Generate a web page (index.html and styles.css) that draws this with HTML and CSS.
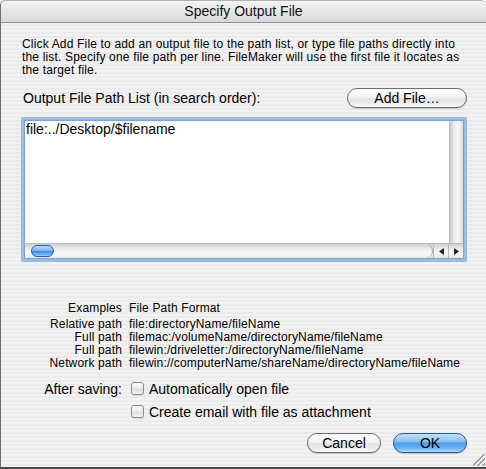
FILE: index.html
```html
<!DOCTYPE html>
<html>
<head>
<meta charset="utf-8">
<link rel="stylesheet" href="styles.css">
</head>
<body>
<div class="window">
  <div class="titlebar">Specify Output File</div>
  <div class="content">
    <p class="desc">Click Add File to add an output file to the path list, or type file paths directly into<br>the list. Specify one file path per line. FileMaker will use the first file it locates as<br>the target file.</p>
    <div class="list-head">
      <span class="label">Output File Path List (in search order):</span>
      <button class="btn btn-add">Add File…</button>
    </div>
    <div class="pathlist">
      <div class="pathlist-main">
        <div class="pathlist-text">file:../Desktop/$filename</div>
        <div class="vtrack"></div>
      </div>
      <div class="hbar">
        <div class="htrack"><span class="hthumb"></span></div>
        <div class="harrow"><svg width="5" height="7" viewBox="0 0 5 7"><path d="M5 0 L0 3.5 L5 7 Z" fill="#222"/></svg></div>
        <div class="harrow"><svg width="5" height="7" viewBox="0 0 5 7"><path d="M0 0 L5 3.5 L0 7 Z" fill="#222"/></svg></div>
      </div>
    </div>
    <div class="examples">
      <span class="ex-label ex-head">Examples</span><span class="ex-head">File Path Format</span>
      <span class="ex-label">Relative path</span><span>file:directoryName/fileName</span>
      <span class="ex-label">Full path</span><span>filemac:/volumeName/directoryName/fileName</span>
      <span class="ex-label">Full path</span><span>filewin:/driveletter:/directoryName/fileName</span>
      <span class="ex-label">Network path</span><span>filewin://computerName/shareName/directoryName/fileName</span>
    </div>
    <div class="after">
      <span class="after-label">After saving:</span>
      <label class="check"><span class="box"></span>Automatically open file</label>
      <span></span>
      <label class="check"><span class="box"></span>Create email with file as attachment</label>
    </div>
    <div class="actions">
      <button class="btn btn-action">Cancel</button>
      <button class="btn btn-action btn-default">OK</button>
    </div>
  </div>
  <div class="grow"></div>
</div>
</body>
</html>
```
FILE: styles.css
```css
* { box-sizing: border-box; }
html, body { margin: 0; padding: 0; background: #fff; }
body { font-family: "Liberation Sans", Arial, sans-serif; color: #000; }

.window {
  position: relative;
  width: 486px;
  height: 469px;
  overflow: hidden;
  border-left: 1px solid #6f6f6f;
  border-bottom: 2px solid #4a4a4a;
  border-top-left-radius: 5px;
  border-top-right-radius: 5px;
  background: repeating-linear-gradient(to bottom, #ebebeb 0, #ebebeb 2px, #f2f2f2 2px, #f2f2f2 4px);
}

.titlebar {
  height: 23px;
  border-bottom: 1px solid #8e8e8e;
  border-top: 1px solid #b0b0b0;
  border-top-left-radius: 5px;
  border-top-right-radius: 5px;
  background: linear-gradient(to bottom, #f3f3f3 0, #e6e6e6 50%, #d9d9d9 100%);
  text-align: center;
  font-size: 14px;
  line-height: 21px;
  color: #111;
}

.content {
  padding: 15px 19px 0 20px;
}

.desc {
  margin: 0 0 0 1px;
  font-size: 12px;
  line-height: 13px;
  letter-spacing: 0.17px;
}

.list-head {
  margin-top: 11px;
  display: flex;
  align-items: center;
  justify-content: space-between;
  height: 20px;
  padding-left: 2px;
}

.label { font-size: 14px; }

.btn {
  font-family: "Liberation Sans", Arial, sans-serif;
  font-size: 14px;
  height: 20px;
  padding: 0;
  border: 1px solid #6c6c6c;
  border-radius: 10px;
  color: #000;
  background: linear-gradient(to bottom, #ffffff 0, #f4f4f4 45%, #e2e2e2 55%, #efefef 85%, #fbfbfb 100%);
  box-shadow: 0 1px 1px rgba(0,0,0,0.18);
  line-height: 17px;
}

.btn-add { width: 120px; }

.pathlist {
  margin-top: 9px;
  height: 145px;
  border: 3px solid #98bbe2;
  border-radius: 2px;
  box-shadow: inset 0 0 0 1px #7fa3cf;
  background: #fff;
  display: flex;
  flex-direction: column;
  padding: 1px;
}

.pathlist-main {
  flex: 1;
  display: flex;
}

.pathlist-text {
  flex: 1;
  font-size: 14px;
  line-height: 16px;
  padding: 0 0 0 1px;
  white-space: nowrap;
}

.vtrack {
  width: 14px;
  background: linear-gradient(to right, #c9c9c9 0, #e6e6e6 25%, #f7f7f7 55%, #e9e9e9 85%, #d3d3d3 100%);
  border-left: 1px solid #bdbdbd;
}

.hbar {
  height: 15px;
  display: flex;
  border-top: 1px solid #bdbdbd;
  background: linear-gradient(to bottom, #d0d0d0 0, #e8e8e8 30%, #f7f7f7 60%, #e6e6e6 100%);
}

.htrack {
  flex: 1;
  position: relative;
  border-radius: 0 7px 7px 0;
  border-right: 1px solid #a8a8a8;
  background: linear-gradient(to bottom, #cfcfcf 0, #ececec 35%, #fafafa 65%, #e9e9e9 100%);
}

.hthumb {
  position: absolute;
  left: 6px;
  top: 1px;
  width: 23px;
  height: 12px;
  border-radius: 6px;
  border: 1px solid #2d5aa0;
  background: linear-gradient(to bottom, #b8dafc 0, #7db8f2 45%, #3f8ee3 55%, #6cb2f4 85%, #a9d8fc 100%);
}

.harrow {
  width: 15px;
  display: flex;
  align-items: center;
  justify-content: center;
  border-left: 1px solid #b7b7b7;
}
.harrow:first-of-type { border-left: none; }

.examples {
  margin-top: 40px;
  display: grid;
  grid-template-columns: 101px auto;
  column-gap: 7px;
  font-size: 12px;
  line-height: 13px;
  letter-spacing: 0.15px;
}
.ex-label { text-align: right; }
.ex-head { margin-bottom: 3px; }

.after {
  margin-top: 7px;
  display: grid;
  grid-template-columns: 101px auto;
  column-gap: 9px;
  grid-auto-rows: 23px;
  align-items: center;
  font-size: 14px;
}
.after-label { text-align: right; }

.check {
  display: flex;
  align-items: center;
}

.box {
  width: 13px;
  height: 13px;
  margin-right: 5px;
  border: 1px solid #8b8b8b;
  border-radius: 3px;
  background: linear-gradient(to bottom, #fbfbfb 0, #ececec 45%, #dcdcdc 55%, #f3f3f3 100%);
  box-shadow: 0 1px 1px rgba(0,0,0,0.12);
}

.actions {
  margin-top: 10px;
  display: flex;
  justify-content: flex-end;
  gap: 12px;
}

.btn-action { width: 74px; }

.btn-default {
  border-color: #28549c;
  background: linear-gradient(to bottom, #c4e2fd 0, #8cc4f6 40%, #4d9aea 52%, #6fb5f4 80%, #b5e1fd 100%);
}

.grow {
  position: absolute;
  right: 1px;
  bottom: 1px;
  width: 12px;
  height: 12px;
  background: linear-gradient(135deg, transparent 0, transparent 45%, #9a9a9a 45%, #9a9a9a 52%, transparent 52%, transparent 65%, #9a9a9a 65%, #9a9a9a 72%, transparent 72%, transparent 85%, #9a9a9a 85%, #9a9a9a 92%, transparent 92%);
}
```
